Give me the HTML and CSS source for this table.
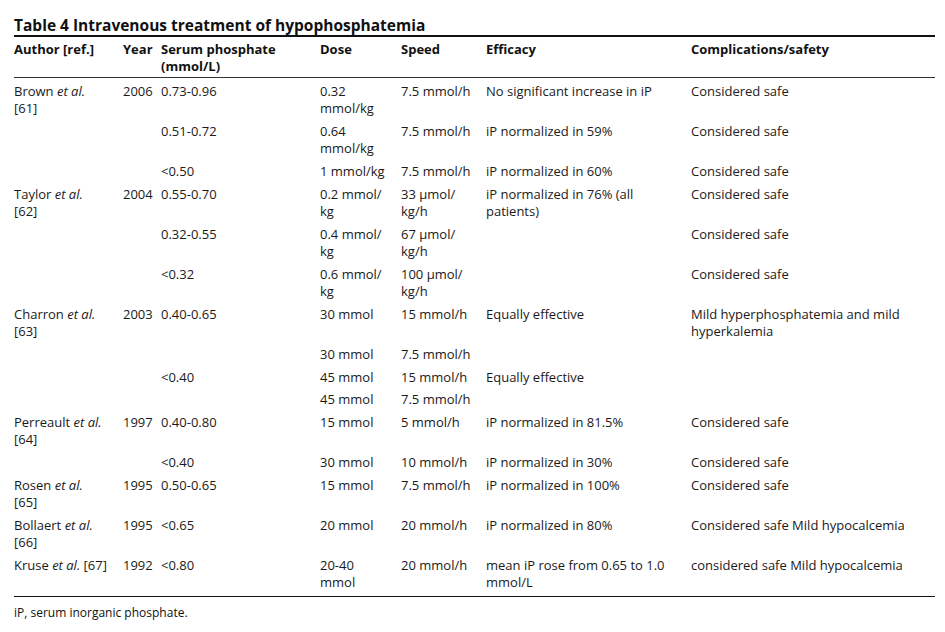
FILE: index.html
```html
<!DOCTYPE html>
<html lang="en">
<head>
<meta charset="utf-8">
<title>Table 4 Intravenous treatment of hypophosphatemia</title>
<link rel="stylesheet" href="styles.css">
</head>
<body>
<div class="page">
  <h1 class="caption">Table 4 Intravenous treatment of hypophosphatemia</h1>
  <table class="data">
    <colgroup>
      <col class="c-author"><col class="c-year"><col class="c-serum"><col class="c-dose"><col class="c-speed"><col class="c-eff"><col class="c-comp">
    </colgroup>
    <thead>
      <tr>
        <th>Author [ref.]</th>
        <th>Year</th>
        <th>Serum phosphate<br>(mmol/L)</th>
        <th>Dose</th>
        <th>Speed</th>
        <th>Efficacy</th>
        <th>Complications/safety</th>
      </tr>
    </thead>
    <tbody>
      <tr>
        <td>Brown <i>et al.</i><br>[61]</td><td>2006</td><td>0.73-0.96</td><td>0.32<br>mmol/kg</td><td>7.5 mmol/h</td><td>No significant increase in iP</td><td>Considered safe</td>
      </tr>
      <tr>
        <td></td><td></td><td>0.51-0.72</td><td>0.64<br>mmol/kg</td><td>7.5 mmol/h</td><td>iP normalized in 59%</td><td>Considered safe</td>
      </tr>
      <tr>
        <td></td><td></td><td>&lt;0.50</td><td>1 mmol/kg</td><td>7.5 mmol/h</td><td>iP normalized in 60%</td><td>Considered safe</td>
      </tr>
      <tr>
        <td>Taylor <i>et al.</i><br>[62]</td><td>2004</td><td>0.55-0.70</td><td>0.2 mmol/<br>kg</td><td>33 μmol/<br>kg/h</td><td>iP normalized in 76% (all<br>patients)</td><td>Considered safe</td>
      </tr>
      <tr>
        <td></td><td></td><td>0.32-0.55</td><td>0.4 mmol/<br>kg</td><td>67 μmol/<br>kg/h</td><td></td><td>Considered safe</td>
      </tr>
      <tr>
        <td></td><td></td><td>&lt;0.32</td><td>0.6 mmol/<br>kg</td><td>100 μmol/<br>kg/h</td><td></td><td>Considered safe</td>
      </tr>
      <tr>
        <td>Charron <i>et al.</i><br>[63]</td><td>2003</td><td>0.40-0.65</td><td>30 mmol</td><td>15 mmol/h</td><td>Equally effective</td><td>Mild hyperphosphatemia and mild<br>hyperkalemia</td>
      </tr>
      <tr>
        <td></td><td></td><td></td><td>30 mmol</td><td>7.5 mmol/h</td><td></td><td></td>
      </tr>
      <tr class="tight">
        <td></td><td></td><td>&lt;0.40</td><td>45 mmol</td><td>15 mmol/h</td><td>Equally effective</td><td></td>
      </tr>
      <tr>
        <td></td><td></td><td></td><td>45 mmol</td><td>7.5 mmol/h</td><td></td><td></td>
      </tr>
      <tr>
        <td>Perreault <i>et al.</i><br>[64]</td><td>1997</td><td>0.40-0.80</td><td>15 mmol</td><td>5 mmol/h</td><td>iP normalized in 81.5%</td><td>Considered safe</td>
      </tr>
      <tr>
        <td></td><td></td><td>&lt;0.40</td><td>30 mmol</td><td>10 mmol/h</td><td>iP normalized in 30%</td><td>Considered safe</td>
      </tr>
      <tr>
        <td>Rosen <i>et al.</i><br>[65]</td><td>1995</td><td>0.50-0.65</td><td>15 mmol</td><td>7.5 mmol/h</td><td>iP normalized in 100%</td><td>Considered safe</td>
      </tr>
      <tr>
        <td>Bollaert <i>et al.</i><br>[66]</td><td>1995</td><td>&lt;0.65</td><td>20 mmol</td><td>20 mmol/h</td><td>iP normalized in 80%</td><td>Considered safe Mild hypocalcemia</td>
      </tr>
      <tr>
        <td>Kruse <i>et al.</i> [67]</td><td>1992</td><td>&lt;0.80</td><td>20-40<br>mmol</td><td>20 mmol/h</td><td>mean iP rose from 0.65 to 1.0<br>mmol/L</td><td>considered safe Mild hypocalcemia</td>
      </tr>
    </tbody>
  </table>
  <p class="footnote">iP, serum inorganic phosphate.</p>
</div>
</body>
</html>
```
FILE: styles.css
```css
html, body {
  margin: 0;
  padding: 0;
  background: #ffffff;
}

.page {
  padding: 16px 10px 0 14px;
  width: 921px;
  font-family: "Open Sans", "Liberation Sans", sans-serif;
  color: #1a1a1a;
}

.caption {
  margin: 0 0 1px 0;
  font-size: 15.5px;
  line-height: 18px;
  font-weight: 700;
  color: #111;
}

.data {
  width: 921px;
  table-layout: fixed;
  border-collapse: collapse;
  font-size: 13px;
  line-height: 17px;
}

.c-author { width: 109px; }
.c-year   { width: 38px; }
.c-serum  { width: 159px; }
.c-dose   { width: 81px; }
.c-speed  { width: 85px; }
.c-eff    { width: 205px; }
.c-comp   { width: 244px; }

.data thead tr {
  border-top: 2px solid #111;
  border-bottom: 1.5px solid #333;
}

.data th {
  text-align: left;
  vertical-align: top;
  font-weight: 700;
  color: #111;
  padding: 4px 4px 2px 0;
}

.data td {
  vertical-align: top;
  padding: 3px 4px 3px 0;
  white-space: nowrap;
}

.data tbody tr:first-child td {
  padding-top: 5px;
}

.data tbody tr.tight td {
  padding-bottom: 2px;
}

.data tbody tr:last-child td {
  padding-bottom: 5px;
}

.data tbody tr:last-child {
  border-bottom: 1.5px solid #111;
}

.footnote {
  margin: 8px 0 0 0;
  font-size: 12px;
  line-height: 16px;
  color: #111;
}
```
